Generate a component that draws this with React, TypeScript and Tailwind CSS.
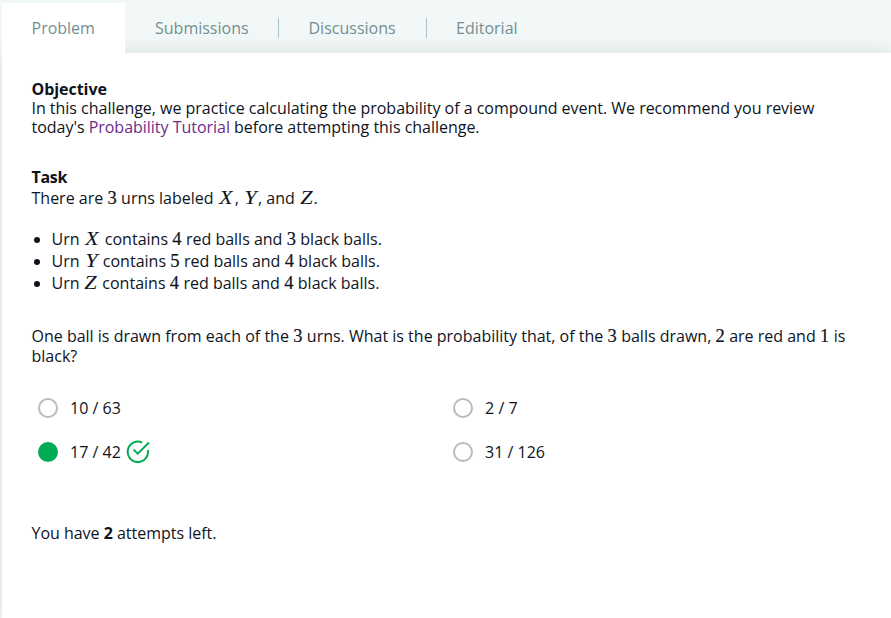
import type { ReactNode } from "react";

const tabs = [
  { label: "Submissions", cls: "w-[154px] border-r pl-[30px]" },
  { label: "Discussions", cls: "w-[148px] border-r pl-[29.5px]" },
  { label: "Editorial", cls: "w-[122px] pl-[29px]" },
];

function Num({ children }: { children: ReactNode }) {
  return (
    <span className="inline-block w-[9.6px] text-center font-['Liberation_Serif',serif] text-[18.5px] leading-none [-webkit-text-stroke:0.2px_#0e141e]">
      {children}
    </span>
  );
}

const symbolWidths: Record<string, string> = {
  X: "w-[17px]",
  Y: "w-[15px]",
  Z: "w-[14.5px]",
};

function Sym({ name }: { name: string }) {
  return (
    <span
      className={`inline-block ${symbolWidths[name]} text-center font-['Liberation_Serif',serif] text-[19.5px] italic leading-none`}
    >
      <span className="inline-block scale-x-[1.15]">{name}</span>
    </span>
  );
}

const urns = [
  { name: "X", red: 4, black: 3 },
  { name: "Y", red: 5, black: 4 },
  { name: "Z", red: 4, black: 4 },
];

const options = [
  { label: "10 / 63" },
  { label: "2 / 7" },
  { label: "17 / 42", correct: true },
  { label: "31 / 126" },
];

function CheckIcon() {
  return (
    <svg
      className="ml-[5.5px] h-6 w-6"
      viewBox="0 0 24 24"
      fill="none"
      stroke="#00ab55"
      strokeWidth="2"
    >
      <path d="M16.2 2.6A10.2 10.2 0 1 0 21.9 10" />
      <path d="M7.6 9.6L11.8 13.7L23 2.5" />
    </svg>
  );
}

export default function App() {
  return (
    <div className="h-[618px] w-[891px] overflow-hidden bg-[#f2f7f7] pl-[2px] pt-[3px] font-['Open_Sans',sans-serif] text-[16px] text-[#0e141e]">
      <div className="flex h-full flex-col">
        <nav className="relative z-10 flex h-[50px] shrink-0 items-center text-[#738f93]">
          <div className="flex h-full w-[123px] items-center bg-white pl-[29.5px]">Problem</div>
          {tabs.map((t) => (
            <div key={t.label} className={`flex h-[20px] items-center border-[#a9c4c9] ${t.cls}`}>
              {t.label}
            </div>
          ))}
        </nav>
        <main className="grow whitespace-nowrap bg-white pl-[29.5px] pt-[27px] shadow-[0_0_20px_0_rgba(0,0,0,0.11)]">
          <section className="leading-[19px]">
            <h2 className="font-bold tracking-[-0.05px]">Objective</h2>
            <p className="tracking-[-0.022px]">
              In this challenge, we practice calculating the probability of a compound event. We recommend you review
              <br />
              today's <a className="text-[#6c2c8c]">Probability Tutorial</a> before attempting this challenge.
            </p>
          </section>
          <section className="mt-[30px]">
            <h2 className="h-[21px] font-bold leading-[21px] tracking-[-0.3px]">Task</h2>
            <p className="h-[21px] leading-[21px]">
              There are <Num>3</Num> urns labeled <Sym name="X" />, <Sym name="Y" />, and <Sym name="Z" />.
            </p>
            <ul className="mt-[19px]">
              {urns.map((u) => (
                <li key={u.name} className="flex h-[22px] items-center">
                  <span className="ml-[2px] mr-[12px] mt-[2px] h-[6px] w-[6px] rounded-full bg-[#0e141e]" />
                  <span className="leading-[22px]">
                    Urn <Sym name={u.name} /> contains <Num>{u.red}</Num> red balls and <Num>{u.black}</Num> black balls.
                  </span>
                </li>
              ))}
            </ul>
          </section>
          <p className="mt-[32px] h-[40px] leading-[20px]">
            One ball is drawn from each of the <Num>3</Num> urns. What is the probability that, of the <Num>3</Num> balls
            drawn, <Num>2</Num> are red and <Num>1</Num> is
            <br />
            black?
          </p>
          <div className="mt-[20px] grid w-[830px] grid-cols-2">
            {options.map((o) => (
              <div key={o.label} className="flex h-[44px] items-center pl-[6.6px]">
                <span
                  className={`mr-[12px] h-[20px] w-[20px] rounded-full border-2 ${
                    o.correct ? "border-[#00ab55] bg-[#00ab55]" : "border-[#b7bcc0] bg-white"
                  }`}
                />
                <span>{o.label}</span>
                {o.correct && <CheckIcon />}
              </div>
            ))}
          </div>
          <p className="mt-[47px] leading-[24px] tracking-[-0.02px]">
            You have <b>2</b> attempts left.
          </p>
        </main>
      </div>
    </div>
  );
}
